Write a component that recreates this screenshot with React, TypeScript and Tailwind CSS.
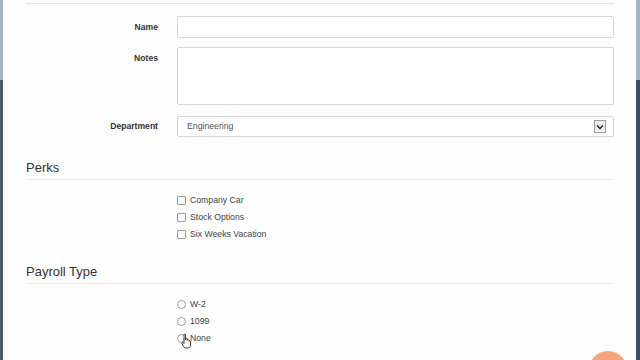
const font = { fontFamily: '"Liberation Sans", Arial, sans-serif' };

const FieldRow = ({ label, children, top = false, className = '' }: { label: string; children: React.ReactNode; top?: boolean; className?: string }) => (
  <div className={`flex ${top ? 'items-start' : 'items-center'} gap-[19px] ${className}`}>
    <div className={`w-[132px] text-right text-[8.6px] font-bold text-[#333] ${top ? 'pt-[5px]' : ''}`}>{label}</div>
    <div className="flex-1">{children}</div>
  </div>
);

const SectionHeading = ({ title }: { title: string }) => (
  <div className="border-b border-[#ebebeb] pb-[3px]">
    <h2 className="text-[13px] leading-[16px] text-[#333]">{title}</h2>
  </div>
);

const Check = ({ label }: { label: string }) => (
  <div className="flex items-center h-[17px] gap-[4px]">
    <span className="w-[9px] h-[9px] border border-[#9a9a9a] bg-white rounded-[1px]" />
    <span className="text-[8.7px] text-[#444]">{label}</span>
  </div>
);

const Radio = ({ label }: { label: string }) => (
  <div className="flex items-center h-[17px] gap-[4px]">
    <span className="w-[9px] h-[9px] border border-[#9a9a9a] bg-white rounded-full" />
    <span className="text-[8.7px] text-[#444]">{label}</span>
  </div>
);

export default function App() {
  return (
    <div className="relative w-[640px] h-[360px] overflow-hidden bg-[#fdfdfd] flex" style={font}>
      <div className="w-[3px] flex flex-col">
        <div className="h-[80px] bg-[#aab3c0]" />
        <div className="flex-1 bg-[#4b5870]" />
      </div>

      <div className="flex-1 pl-[23px] pr-[22px]">
        <div className="h-[4px] border-b border-[#e6e6e6]" />

        <div className="mt-[12px] flex flex-col">
          <FieldRow label="Name">
            <div className="h-[22px] border border-[#d6d6d6] bg-white rounded-[2px]" />
          </FieldRow>
          <FieldRow label="Notes" top className="mt-[9px]">
            <div className="h-[58px] border border-[#d6d6d6] bg-white rounded-[2px]" />
          </FieldRow>
          <FieldRow label="Department" className="mt-[11px]">
            <div className="h-[21px] border border-[#d6d6d6] bg-white rounded-[2px] flex items-center justify-between pl-[9px] pr-[7px]">
              <span className="text-[8.7px] text-[#555]">Engineering</span>
              <span className="w-[12px] h-[13px] border border-[#9c9c9c] bg-[#f0f0f0] flex items-center justify-center">
                <svg width="8" height="6" viewBox="0 0 8 6">
                  <path d="M1 1.5 L4 4.5 L7 1.5" fill="none" stroke="#222" strokeWidth="1.4" />
                </svg>
              </span>
            </div>
          </FieldRow>
        </div>

        <div className="mt-[23px]">
          <SectionHeading title="Perks" />
        </div>
        <div className="mt-[12px] pl-[151px]">
          <Check label="Company Car" />
          <Check label="Stock Options" />
          <Check label="Six Weeks Vacation" />
        </div>

        <div className="mt-[21px]">
          <SectionHeading title="Payroll Type" />
        </div>
        <div className="mt-[12px] pl-[151px]">
          <Radio label="W-2" />
          <Radio label="1099" />
          <Radio label="None" />
        </div>
      </div>

      <div className="w-[4px] flex flex-col">
        <div className="h-[80px] bg-[#aab3c0]" />
        <div className="flex-1 bg-[#3e4b66]" />
      </div>

      {/* mouse pointer over the radio */}
      <svg className="absolute left-[181px] top-[333px]" width="11" height="16" viewBox="0 0 11 16">
        <path
          d="M3 1.5 C3 0.8 4.5 0.8 4.5 1.5 L4.5 7 L5 5.8 C5.2 5.2 6.5 5.3 6.5 6 L6.5 7.2 C6.8 6.6 8 6.7 8 7.4 L8 8.2 C8.3 7.7 9.5 7.8 9.5 8.5 L9.5 12 C9.5 13.8 8.5 15 6.5 15 L5 15 C3.8 15 3.2 14.4 2.6 13.5 L0.8 10.3 C0.4 9.6 1.4 8.9 2 9.5 L3 10.6 Z"
          fill="#fff"
          stroke="#222"
          strokeWidth="0.9"
        />
      </svg>

      <div className="absolute left-[589px] top-[351px] w-[38px] h-[38px] rounded-full bg-[#f2a57a]" />
    </div>
  );
}
